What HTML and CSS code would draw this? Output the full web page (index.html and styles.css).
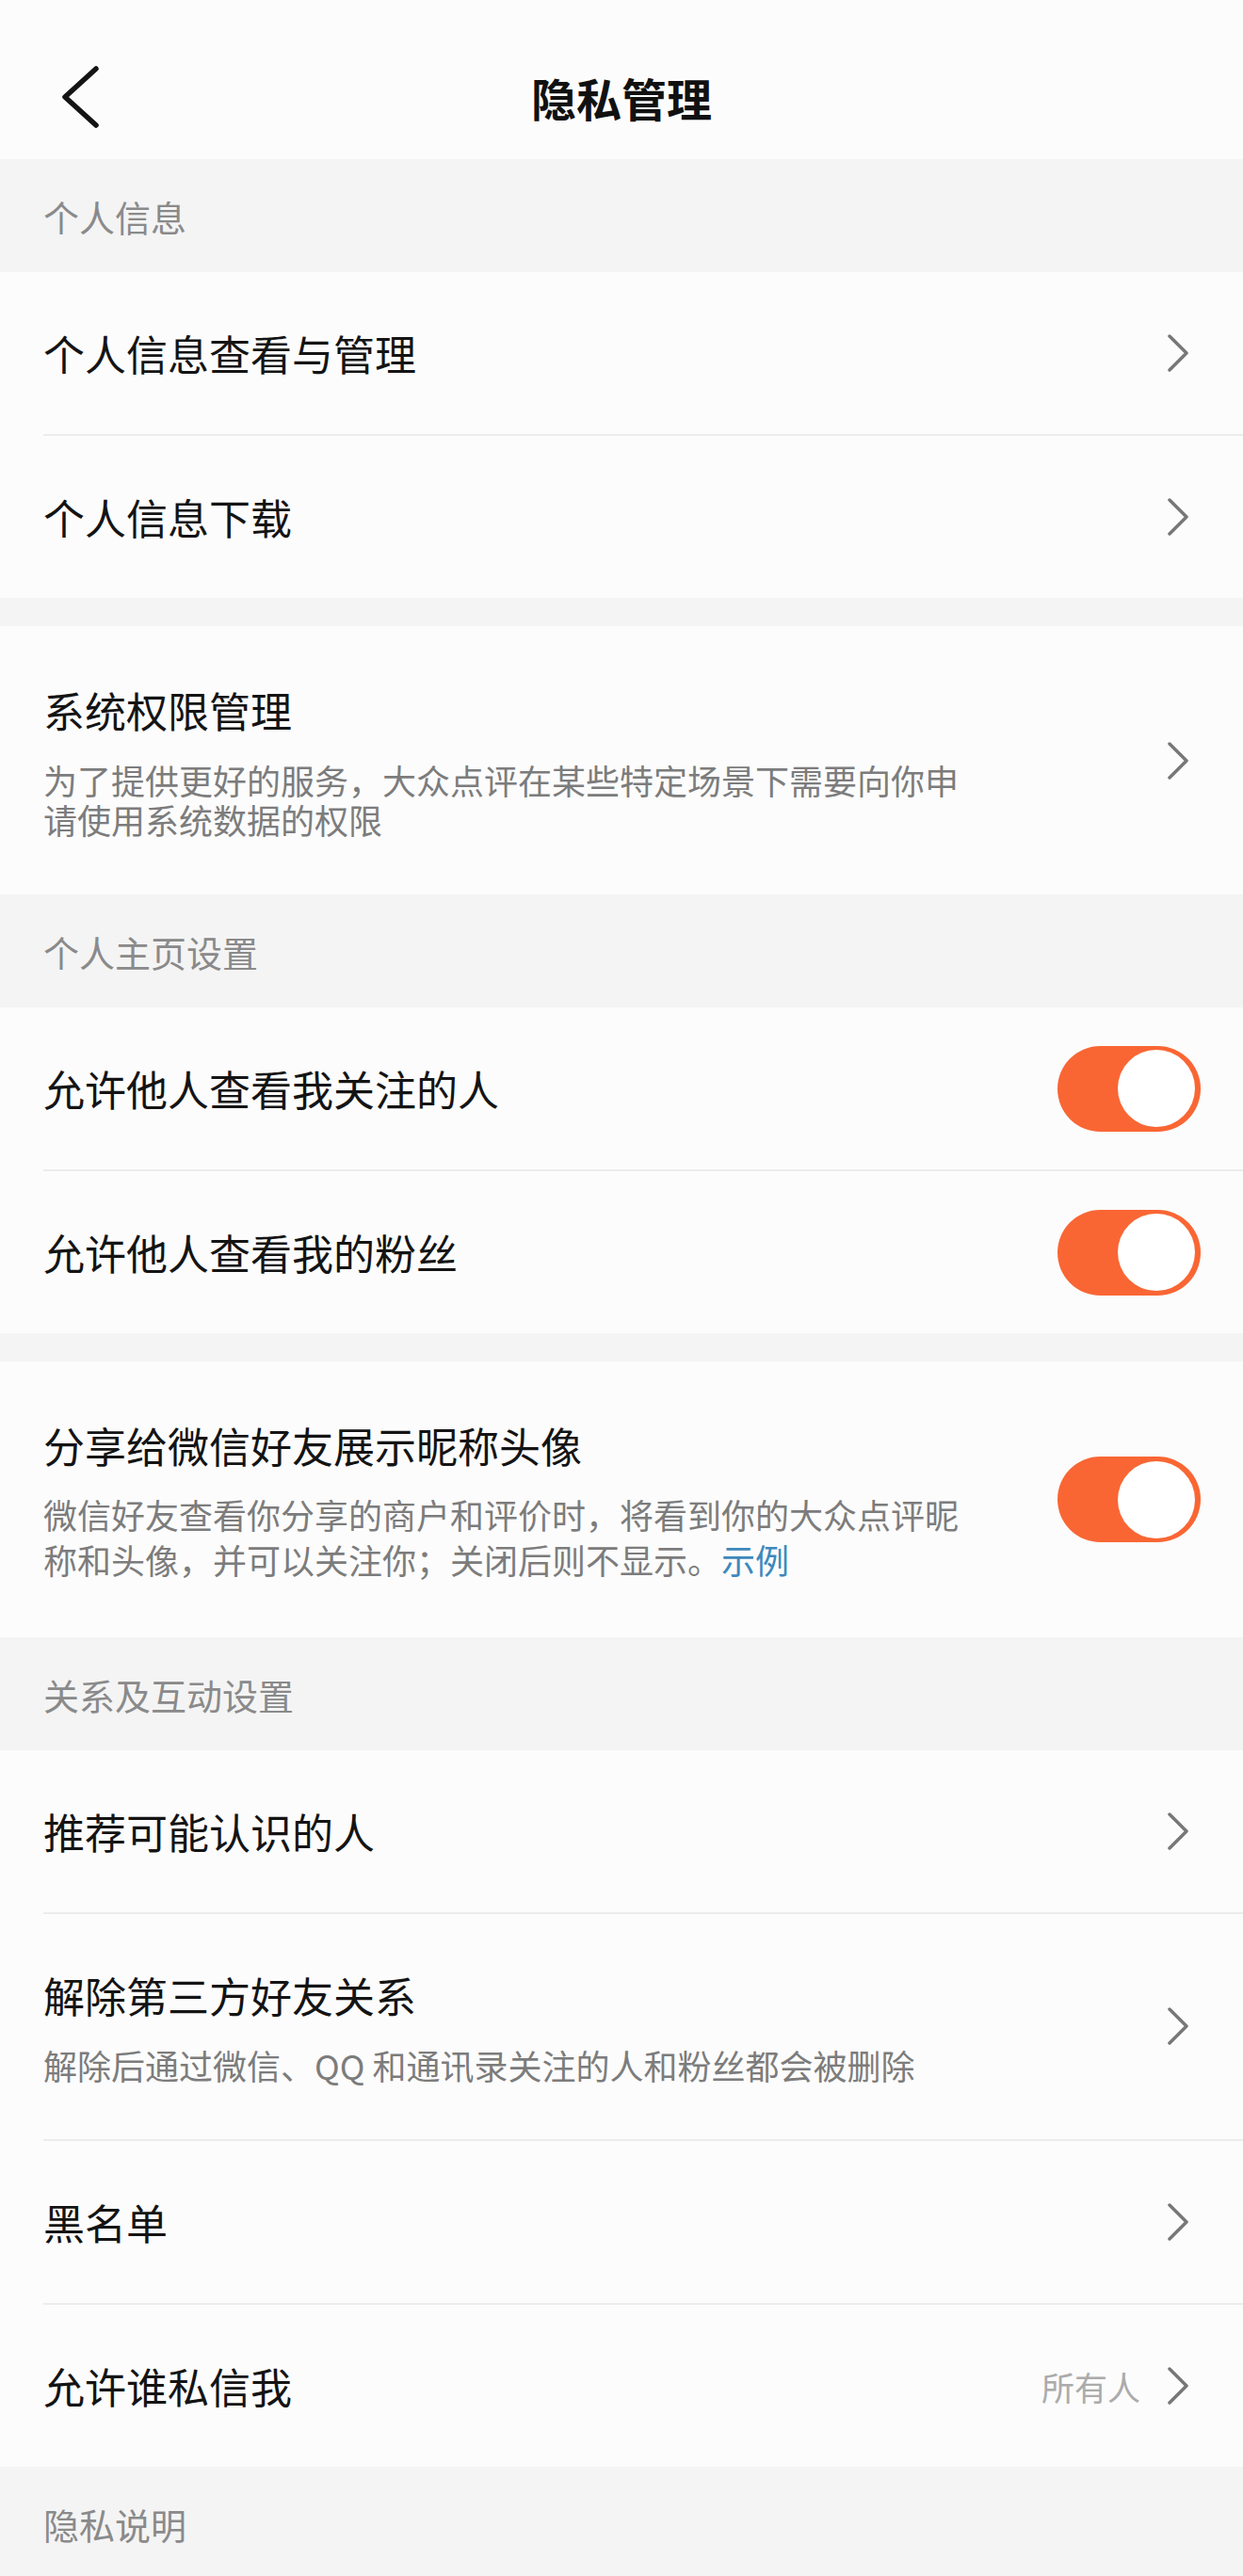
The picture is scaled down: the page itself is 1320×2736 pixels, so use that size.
FILE: index.html
```html
<!DOCTYPE html>
<html lang="zh-CN">
<head>
    <meta charset="UTF-8">
    <meta name="viewport" content="width=device-width, initial-scale=1">
    <title>隐私管理</title>
    <link rel="stylesheet" href="styles.css">
</head>
<body>
    <header class="nav">
        <div class="nav-back">
            <svg width="40" height="66" viewBox="0 0 40 66"><polyline points="36,3 3,33 36,63" fill="none" stroke="#141414" stroke-width="5.5" stroke-linecap="round" stroke-linejoin="round"/></svg>
        </div>
        <h1 class="nav-title">隐私管理</h1>
        <div></div>
    </header>

    <div class="section-label">个人信息</div>
    <div class="group">
        <div class="row">
            <div class="row-body">
                <span class="row-title">个人信息查看与管理</span>
                <svg class="chevron" width="24" height="40" viewBox="0 0 24 40"><polyline points="3,2 21,20 3,38" fill="none" stroke="#777" stroke-width="3.5" stroke-linecap="round" stroke-linejoin="round"/></svg>
            </div>
        </div>
        <div class="row">
            <div class="row-body">
                <span class="row-title">个人信息下载</span>
                <svg class="chevron" width="24" height="40" viewBox="0 0 24 40"><polyline points="3,2 21,20 3,38" fill="none" stroke="#777" stroke-width="3.5" stroke-linecap="round" stroke-linejoin="round"/></svg>
            </div>
        </div>
    </div>

    <div class="spacer"></div>
    <div class="group">
        <div class="row">
            <div class="row-body tall">
                <div class="row-text">
                    <div class="row-title">系统权限管理</div>
                    <div class="row-desc">为了提供更好的服务，大众点评在某些特定场景下需要向你申请使用系统数据的权限</div>
                </div>
                <svg class="chevron" width="24" height="40" viewBox="0 0 24 40"><polyline points="3,2 21,20 3,38" fill="none" stroke="#777" stroke-width="3.5" stroke-linecap="round" stroke-linejoin="round"/></svg>
            </div>
        </div>
    </div>

    <div class="section-label">个人主页设置</div>
    <div class="group">
        <div class="row">
            <div class="row-body toggle-row">
                <span class="row-title">允许他人查看我关注的人</span>
                <span class="switch"><span class="knob"></span></span>
            </div>
        </div>
        <div class="row">
            <div class="row-body toggle-row">
                <span class="row-title">允许他人查看我的粉丝</span>
                <span class="switch"><span class="knob"></span></span>
            </div>
        </div>
    </div>

    <div class="spacer"></div>
    <div class="group">
        <div class="row">
            <div class="row-body tall toggle-row share">
                <div class="row-text">
                    <div class="row-title">分享给微信好友展示昵称头像</div>
                    <div class="row-desc">微信好友查看你分享的商户和评价时，将看到你的大众点评昵称和头像，并可以关注你；关闭后则不显示。<a class="link">示例</a></div>
                </div>
                <span class="switch"><span class="knob"></span></span>
            </div>
        </div>
    </div>

    <div class="section-label">关系及互动设置</div>
    <div class="group">
        <div class="row">
            <div class="row-body">
                <span class="row-title">推荐可能认识的人</span>
                <svg class="chevron" width="24" height="40" viewBox="0 0 24 40"><polyline points="3,2 21,20 3,38" fill="none" stroke="#777" stroke-width="3.5" stroke-linecap="round" stroke-linejoin="round"/></svg>
            </div>
        </div>
        <div class="row">
            <div class="row-body tall compact">
                <div class="row-text">
                    <div class="row-title">解除第三方好友关系</div>
                    <div class="row-desc">解除后通过微信、QQ 和通讯录关注的人和粉丝都会被删除</div>
                </div>
                <svg class="chevron" width="24" height="40" viewBox="0 0 24 40"><polyline points="3,2 21,20 3,38" fill="none" stroke="#777" stroke-width="3.5" stroke-linecap="round" stroke-linejoin="round"/></svg>
            </div>
        </div>
        <div class="row">
            <div class="row-body">
                <span class="row-title">黑名单</span>
                <svg class="chevron" width="24" height="40" viewBox="0 0 24 40"><polyline points="3,2 21,20 3,38" fill="none" stroke="#777" stroke-width="3.5" stroke-linecap="round" stroke-linejoin="round"/></svg>
            </div>
        </div>
        <div class="row">
            <div class="row-body">
                <span class="row-title">允许谁私信我</span>
                <span class="row-extra">
                    <span class="row-value">所有人</span>
                    <svg class="chevron" width="24" height="40" viewBox="0 0 24 40"><polyline points="3,2 21,20 3,38" fill="none" stroke="#777" stroke-width="3.5" stroke-linecap="round" stroke-linejoin="round"/></svg>
                </span>
            </div>
        </div>
    </div>

    <div class="section-label">隐私说明</div>
</body>
</html>
```

FILE: styles.css
```css
body {
    margin: 0;
    font-family: "Noto Sans CJK SC", "Noto Sans", sans-serif;
    background: #f4f4f4;
    color: #141414;
}
.nav {
    height: 133px;
    padding-top: 36px;
    background: #fcfcfc;
    display: grid;
    grid-template-columns: 1fr auto 1fr;
    align-items: center;
}
.nav-back {
    padding-left: 66px;
    display: flex;
    align-items: center;
}
.nav-title {
    margin: 0;
    font-size: 48px;
    font-weight: 700;
    line-height: 60px;
    color: #111;
}
.section-label {
    height: 120px;
    padding-left: 46px;
    display: flex;
    align-items: center;
    font-size: 38px;
    color: #8a8a8a;
}
.spacer {
    height: 30px;
}
.group {
    background: #fcfcfc;
}
.row {
    padding-left: 46px;
}
.row-body {
    min-height: 172px;
    padding-right: 57px;
    display: flex;
    align-items: center;
    justify-content: space-between;
}
.row + .row .row-body {
    border-top: 2px solid #ececec;
}
.row-title {
    font-size: 44px;
    line-height: 60px;
}
.row-body.tall {
    padding-top: 59px;
    padding-bottom: 59px;
    min-height: 0;
}
.row-body.compact {
    padding-top: 56px;
    padding-bottom: 58px;
}
.row-text {
    width: 990px;
}
.row-desc {
    margin-top: 23px;
    font-size: 36px;
    line-height: 42px;
    color: #7c7c7c;
}
.share {
    padding-top: 58px;
    padding-bottom: 57px;
}
.share .row-desc {
    margin-top: 19px;
    line-height: 48px;
}
.link {
    color: #3d89bd;
}
.chevron {
    display: block;
    flex-shrink: 0;
}
.row-extra {
    display: flex;
    align-items: center;
    gap: 28px;
}
.row-value {
    font-size: 35px;
    color: #ababab;
}
.toggle-row {
    padding-right: 45px;
}
.switch {
    width: 152px;
    height: 91px;
    border-radius: 46px;
    background: #f96634;
    box-sizing: border-box;
    padding-right: 6px;
    display: flex;
    align-items: center;
    justify-content: flex-end;
    flex-shrink: 0;
}
.knob {
    width: 82px;
    height: 82px;
    border-radius: 50%;
    background: #fff;
}
```
